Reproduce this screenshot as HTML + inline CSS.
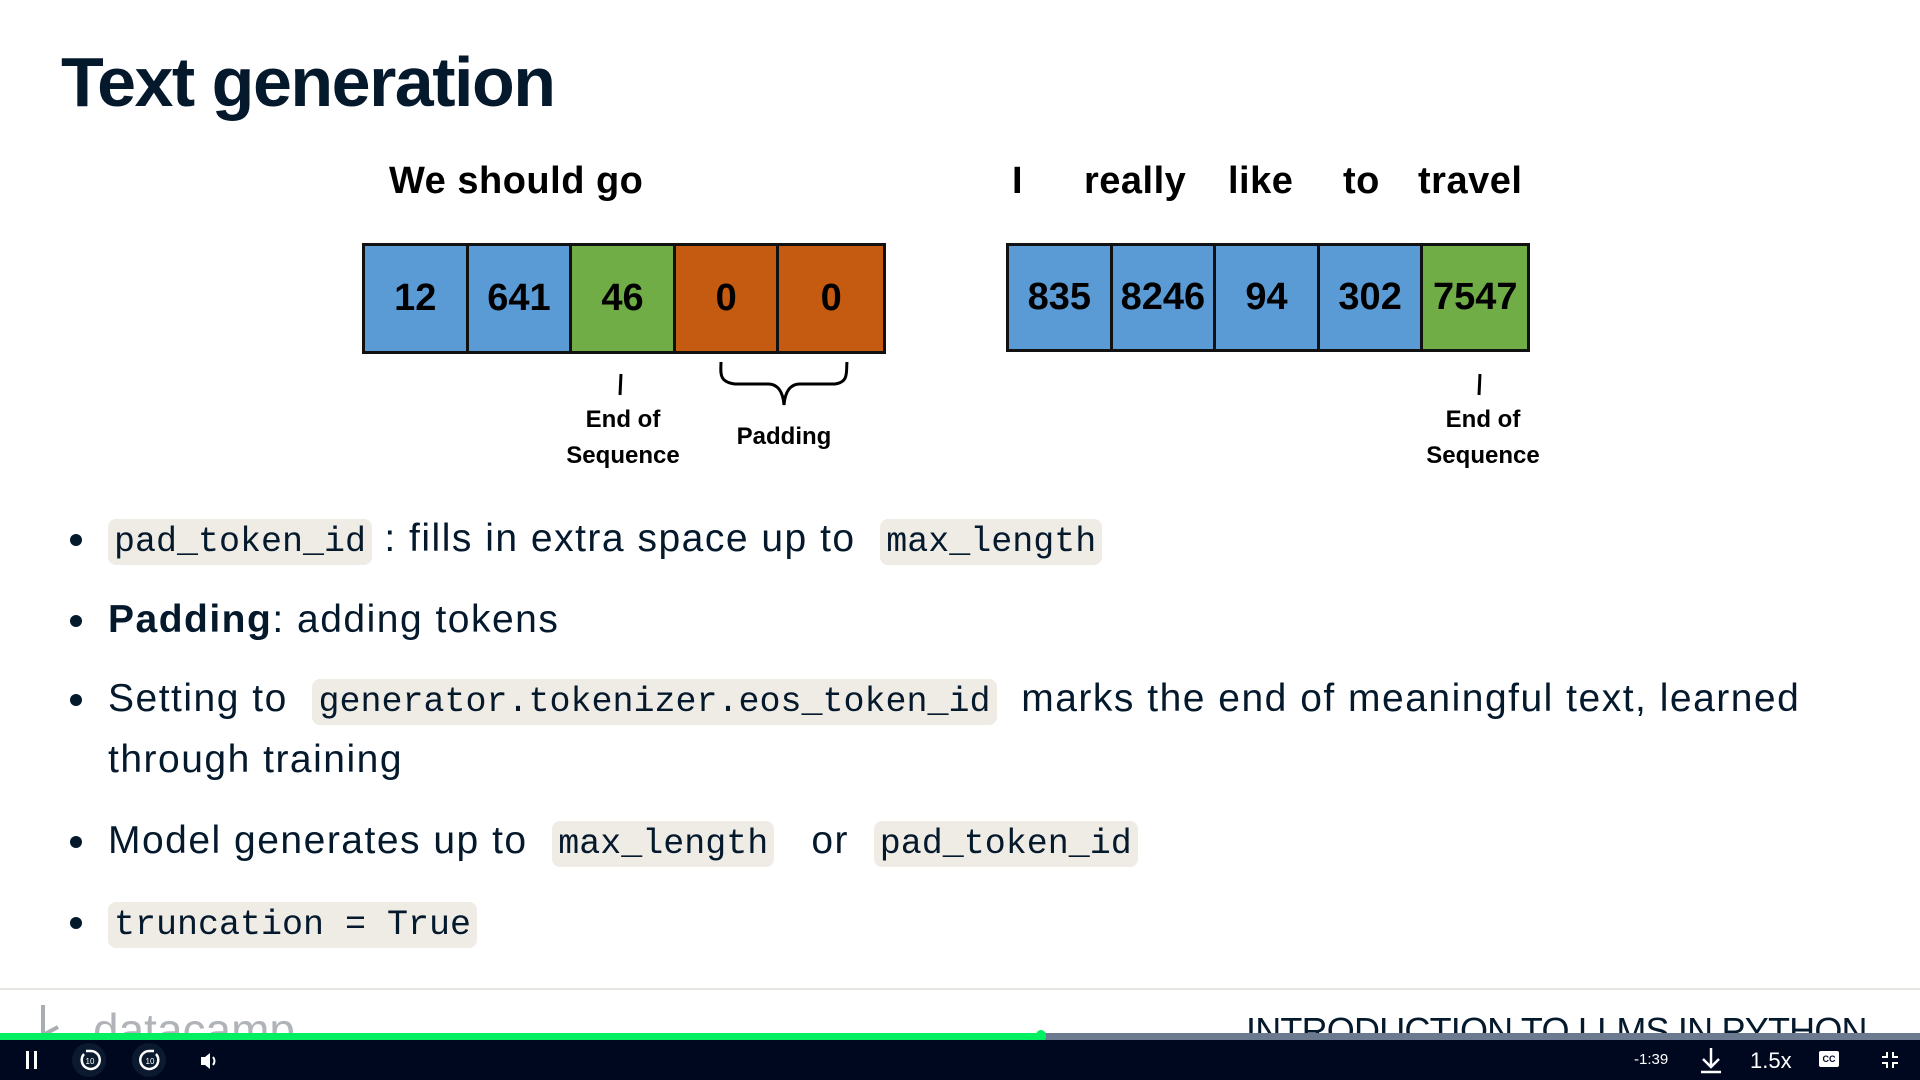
<!DOCTYPE html>
<html><head><meta charset="utf-8"><style>
*{margin:0;padding:0;box-sizing:border-box}
body{width:1920px;height:1080px;background:#fff;position:relative;overflow:hidden;font-family:"Liberation Sans",sans-serif;color:#05192d}
.a{position:absolute;white-space:nowrap}
h1{position:absolute;left:61px;top:42px;font-size:70px;font-weight:bold;letter-spacing:-1.5px}
.lbl{font-weight:bold;font-size:38px;color:#000;letter-spacing:0.5px}
.row{position:absolute;display:flex;border:3px solid #111;height:111px}
.c{width:104.4px;border-right:3px solid #111;display:flex;align-items:center;justify-content:center;font-weight:bold;font-size:38px;color:#000}
.c:last-child{border-right:none}
.b{background:#5b9bd5}.g{background:#70ad47}.o{background:#c55a11}
.small{font-weight:bold;font-size:24px;color:#000;text-align:center;line-height:36px}
.li{position:absolute;left:70px;font-size:39px;letter-spacing:1.5px;line-height:52px;height:52px;white-space:nowrap}
.li::before{content:"";position:absolute;left:0;top:21px;width:12px;height:12px;border-radius:50%;background:#05192d}
.li span.t{position:absolute;left:38px;top:0}
code{font-family:"Liberation Mono",monospace;font-size:35px;letter-spacing:0;background:#efebe5;border-radius:8px;padding:3px 6px}
.bar{position:absolute;left:0;top:1040px;width:1920px;height:40px;background:#000820;color:#fff}
</style></head><body>
<h1>Text generation</h1>

<div class="a lbl" style="left:389px;top:160px">We should go</div>
<div class="a lbl" style="left:1012px;top:160px">I</div>
<div class="a lbl" style="left:1084px;top:160px">really</div>
<div class="a lbl" style="left:1228px;top:160px">like</div>
<div class="a lbl" style="left:1343px;top:160px">to</div>
<div class="a lbl" style="left:1418px;top:160px">travel</div>

<div class="row" style="left:362px;top:243px;width:524px">
<div class="c b">12</div><div class="c b">641</div><div class="c g">46</div><div class="c o">0</div><div class="c o">0</div></div>
<div class="row" style="left:1006px;top:243px;width:524px;height:109px">
<div class="c b">835</div><div class="c b">8246</div><div class="c b">94</div><div class="c b">302</div><div class="c g">7547</div></div>

<svg class="a" style="left:0;top:0" width="1920" height="500">
<path d="M621 374 L620 395" stroke="#000" stroke-width="3" fill="none"/>
<path d="M1480 374 L1479 395" stroke="#000" stroke-width="3" fill="none"/>
<path d="M721 362 C721 372 718 382 735 384 L768 384 C778 384 783 392 784 405 C785 392 790 384 800 384 L835 384 C849 382 846 372 847 362" stroke="#000" stroke-width="3" fill="none"/>
</svg>
<div class="a small" style="left:543px;top:402px;width:160px">End of<br>Sequence</div>
<div class="a small" style="left:704px;top:419px;width:160px">Padding</div>
<div class="a small" style="left:1403px;top:402px;width:160px">End of<br>Sequence</div>

<div class="li" style="top:513px"><span class="t"><code>pad_token_id</code> : fills in extra space up to &nbsp;<code>max_length</code></span></div>
<div class="li" style="top:594px"><span class="t"><b>Padding</b>: adding tokens</span></div>
<div class="li" style="top:673px"><span class="t">Setting to &nbsp;<code>generator.tokenizer.eos_token_id</code> &nbsp;marks the end of meaningful text, learned</span></div>
<div class="a" style="left:108px;top:734px;font-size:39px;letter-spacing:1.5px;line-height:52px">through training</div>
<div class="li" style="top:815px"><span class="t">Model generates up to &nbsp;<code>max_length</code> &nbsp; or &nbsp;<code>pad_token_id</code></span></div>
<div class="li" style="top:896px"><span class="t"><code>truncation = True</code></span></div>

<div class="a" style="left:0;top:988px;width:1920px;height:2px;background:#e8e6e0"></div>
<svg class="a" style="left:40px;top:1005px" width="40" height="35"><path d="M3 0 L3 30 L18 22" stroke="#a9adb1" stroke-width="4" fill="none"/></svg>
<div class="a" style="left:93px;top:1003px;font-size:46px;color:#b0b3b7">datacamp</div>
<div class="a" style="left:1246px;top:1010px;font-size:36px;color:#05192d;letter-spacing:-0.8px">INTRODUCTION TO LLMS IN PYTHON</div>

<div class="a" style="left:0;top:1033px;width:1920px;height:7px;background:#6c7a90"></div>
<div class="a" style="left:0;top:1033px;width:1041px;height:7px;background:#03ef62"></div>
<div class="a" style="left:1036px;top:1030px;width:10px;height:12px;border-radius:5px;background:#03ef62"></div>
<div class="bar">
<div class="a" style="left:26px;top:11px;width:3px;height:18px;background:#fff"></div>
<div class="a" style="left:34px;top:11px;width:3px;height:18px;background:#fff"></div>
<div class="a" style="left:72px;top:3px;width:34px;height:34px;border-radius:50%;background:#0b1a2e"></div>
<div class="a" style="left:132px;top:3px;width:34px;height:34px;border-radius:50%;background:#0b1a2e"></div>
<svg class="a" style="left:78px;top:8px" width="24" height="24"><path d="M6 6 A9 9 0 1 0 12 3 L8 3" stroke="#fff" stroke-width="2.5" fill="none"/><text x="12" y="16" font-size="8" fill="#fff" text-anchor="middle" font-family="Liberation Sans">10</text></svg>
<svg class="a" style="left:138px;top:8px" width="24" height="24"><path d="M18 6 A9 9 0 1 1 12 3 L16 3" stroke="#fff" stroke-width="2.5" fill="none"/><text x="12" y="16" font-size="8" fill="#fff" text-anchor="middle" font-family="Liberation Sans">10</text></svg>
<svg class="a" style="left:199px;top:10px" width="24" height="22"><path d="M2 7 H6 L11 3 V19 L6 15 H2 Z" fill="#fff"/><path d="M14 7 Q17 11 14 15" stroke="#fff" stroke-width="2" fill="none"/></svg>
<div class="a" style="left:1634px;top:11px;font-size:15px">-1:39</div>
<svg class="a" style="left:1698px;top:6px" width="26" height="28"><path d="M13 2 V20 M5 13 L13 21 L21 13 M3 26 H23" stroke="#fff" stroke-width="2.5" fill="none"/></svg>
<div class="a" style="left:1750px;top:8px;font-size:22px">1.5x</div>
<div class="a" style="left:1819px;top:11px;width:20px;height:16px;background:#fff;border-radius:2px;color:#000820;font-size:9px;font-weight:bold;text-align:center;line-height:16px">CC</div>
<svg class="a" style="left:1880px;top:10px" width="20" height="20"><path d="M7 2 V7 H2 M13 2 V7 H18 M7 18 V13 H2 M13 18 V13 H18" stroke="#fff" stroke-width="2" fill="none"/></svg>
</div>
</body></html>
